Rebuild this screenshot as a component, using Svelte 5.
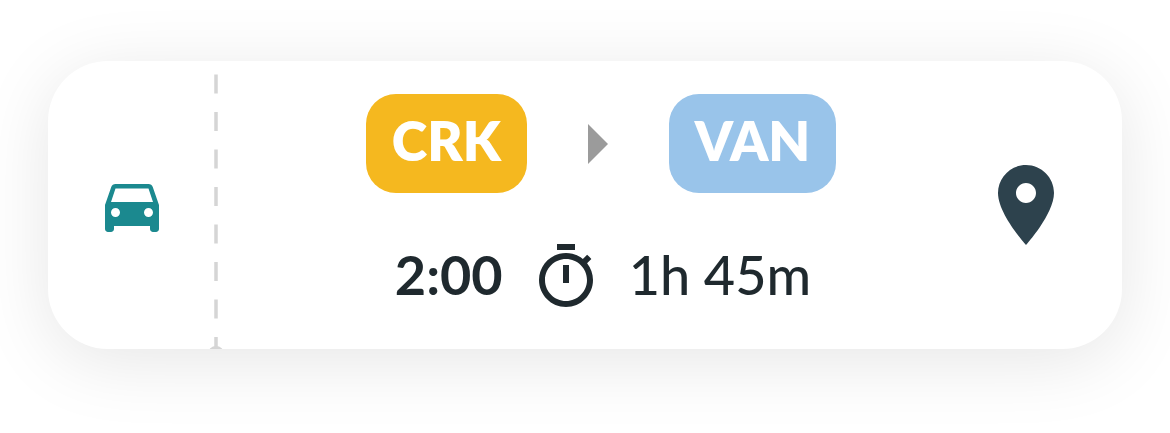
<script>
  const trip = { from: 'CRK', to: 'VAN', time: '2:00', duration: '1h 45m' };
</script>

<main>
  <article class="card">
    <div class="mode">
      <svg class="car" viewBox="0 0 24 24" role="img" aria-label="Car">
        <path d="M18.92 6.01C18.72 5.42 18.16 5 17.5 5h-11c-.66 0-1.21.42-1.42 1.01L3 12v8c0 .55.45 1 1 1h1c.55 0 1-.45 1-1v-1h12v1c0 .55.45 1 1 1h1c.55 0 1-.45 1-1v-8l-2.08-5.99zM6.5 16c-.83 0-1.5-.67-1.5-1.5S5.67 13 6.5 13s1.5.67 1.5 1.5S7.33 16 6.5 16zm11 0c-.83 0-1.5-.67-1.5-1.5s.67-1.5 1.5-1.5 1.5.67 1.5 1.5-.67 1.5-1.5 1.5zM5 11l1.5-4.5h11L19 11H5z" />
      </svg>
    </div>

    <svg class="divider" viewBox="0 0 32 576" preserveAspectRatio="xMidYMin slice" aria-hidden="true">
      <line x1="16" y1="27" x2="16" y2="576" stroke-width="7" stroke-dasharray="38 37" />
      <circle cx="16" cy="586" r="16" />
    </svg>

    <div class="details">
      <div class="route">
        <span class="stop from">{trip.from}</span>
        <svg class="arrow" viewBox="0 0 20 40" aria-hidden="true"><path d="M0 0l20 20L0 40z" /></svg>
        <span class="stop to">{trip.to}</span>
      </div>
      <div class="timing">
        <time class="time">{trip.time}</time>
        <svg class="timer" viewBox="0 0 24 24" aria-hidden="true">
          <path d="M15 1H9v2h6V1zm-4 13h2V8h-2v6zm8.03-6.61l1.42-1.42c-.43-.51-.9-.99-1.41-1.41l-1.42 1.42C16.07 4.74 14.12 4 12 4c-4.97 0-9 4.03-9 9s4.02 9 9 9 9-4.03 9-9c0-2.12-.74-4.07-1.97-5.61zM12 20c-3.87 0-7-3.13-7-7s3.13-7 7-7 7 3.13 7 7-3.13 7-7 7z" />
        </svg>
        <span class="duration">{trip.duration}</span>
      </div>
    </div>

    <svg class="pin" viewBox="0 0 24 24" role="img" aria-label="Location">
      <path d="M12 2C8.13 2 5 5.13 5 9c0 5.25 7 13 7 13s7-7.75 7-13c0-3.87-3.13-7-7-7zm0 9.5c-1.38 0-2.5-1.12-2.5-2.5s1.12-2.5 2.5-2.5 2.5 1.12 2.5 2.5-1.12 2.5-2.5 2.5z" />
    </svg>
  </article>
</main>

<style>
  :global(body) {
    margin: 0;
    background: #fff;
  }
  main {
    padding: 61px 48px 84px;
    font-family: Lato, 'Open Sans', sans-serif;
    font-size: 54px;
    line-height: 64px;
    color: #1f292e;
  }
  svg {
    display: block;
    fill: currentColor;
  }
  .card {
    display: grid;
    grid-template-columns: 160px 16px 1fr auto;
    align-items: center;
    padding-right: 48px;
    border-radius: 60px;
    background: #fff;
    box-shadow: 0 12px 72px rgba(0, 0, 0, 0.1);
    overflow: hidden;
  }
  .mode {
    padding-left: 48px;
  }
  .car {
    width: 72px;
    color: #1b898f;
  }
  .divider {
    width: 16px;
    height: 0;
    min-height: 100%;
    color: #d5d5d5;
  }
  .divider line {
    stroke: currentColor;
  }
  .details {
    display: flex;
    flex-direction: column;
    align-items: center;
    gap: 48px;
    padding: 33px 0 36px;
  }
  .route {
    display: flex;
    align-items: center;
    gap: 61px;
  }
  .stop {
    padding: 15px 26px 20px;
    border-radius: 30px;
    font-weight: 800;
    color: #fff;
  }
  .from {
    background: #f5b81f;
  }
  .to {
    background: #99c4ea;
  }
  .arrow {
    width: 20px;
    color: #9b9b9b;
  }
  .timing {
    display: flex;
    align-items: center;
    gap: 27px;
    padding-left: 4px;
  }
  .time,
  .duration {
    padding-bottom: 4px;
  }
  .time {
    font-weight: 700;
  }
  .duration {
    font-weight: 500;
  }
  .timer {
    width: 72px;
  }
  .pin {
    width: 96px;
    color: #2d424d;
  }
</style>
